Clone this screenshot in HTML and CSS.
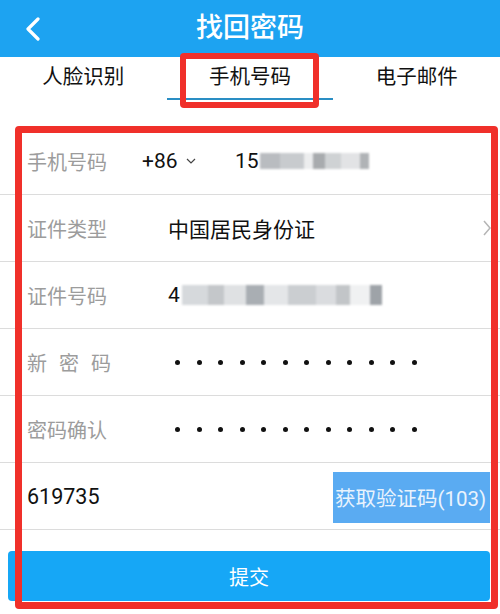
FILE: index.html
```html
<!DOCTYPE html>
<html lang="zh-CN">
<head>
    <meta charset="UTF-8">
    <meta name="viewport" content="width=device-width, initial-scale=1.0">
    <title>找回密码</title>
    <link rel="stylesheet" href="styles.css">
</head>
<body>
    <div class="page">
        <header class="topbar">
            <span class="back">
                <svg width="16" height="24" viewBox="0 0 16 24"><path d="M13 2 L3 12 L13 22" fill="none" stroke="#fff" stroke-width="3.2" stroke-linecap="round" stroke-linejoin="round"/></svg>
            </span>
            <h1 class="title">找回密码</h1>
            <span></span>
        </header>

        <nav class="tabs">
            <div class="tab">人脸识别</div>
            <div class="tab active">手机号码</div>
            <div class="tab">电子邮件</div>
        </nav>

        <form class="form">
            <div class="row">
                <span class="label">手机号码</span>
                <span class="area">+86
                    <svg width="12" height="8" viewBox="0 0 12 8"><path d="M2 2 L6 6 L10 2" fill="none" stroke="#444" stroke-width="1.2"/></svg>
                </span>
                <span class="value">15</span>
                <span class="blur phone-blur">
                    <i style="width:20px;background:#b9bcc0"></i>
                    <i style="width:24px;background:#c8cbce"></i>
                    <i style="width:9px;background:#ecedee"></i>
                    <i style="width:12px;background:#a8abae"></i>
                    <i style="width:16px;background:#cfd2d4"></i>
                    <i style="width:19px;background:#e2e3e5"></i>
                    <i style="width:9px;background:#b0b3b6"></i>
                </span>
            </div>
            <div class="row">
                <span class="label">证件类型</span>
                <span class="value">中国居民身份证</span>
                <svg class="chevron" width="10" height="16" viewBox="0 0 10 16"><path d="M2 1 L8 8 L2 15" fill="none" stroke="#b5b5b5" stroke-width="1.5"/></svg>
            </div>
            <div class="row">
                <span class="label">证件号码</span>
                <span class="value">4</span>
                <span class="blur id-blur">
                    <i style="width:26px;background:#d6d9dc"></i>
                    <i style="width:16px;background:#c4c7ca"></i>
                    <i style="width:22px;background:#dfe1e3"></i>
                    <i style="width:18px;background:#a9aeb3"></i>
                    <i style="width:24px;background:#e4e6e8"></i>
                    <i style="width:28px;background:#cbced1"></i>
                    <i style="width:20px;background:#dadcdf"></i>
                    <i style="width:14px;background:#c2c5c8"></i>
                    <i style="width:20px;background:#f0f1f2"></i>
                    <i style="width:12px;background:#9ea3a8"></i>
                </span>
            </div>
            <div class="row">
                <span class="label spaced">新密码</span>
                <span class="dots">
                    <i></i><i></i><i></i><i></i><i></i><i></i><i></i><i></i><i></i><i></i><i></i><i></i>
                </span>
            </div>
            <div class="row">
                <span class="label">密码确认</span>
                <span class="dots">
                    <i></i><i></i><i></i><i></i><i></i><i></i><i></i><i></i><i></i><i></i><i></i><i></i>
                </span>
            </div>
            <div class="row code-row">
                <span class="code">619735</span>
                <button type="button" class="code-btn">获取验证码(103)</button>
            </div>

            <button type="submit" class="submit">提交</button>
        </form>

        <div class="mark mark-tab"></div>
        <div class="mark mark-form"></div>
    </div>
</body>
</html>
```

FILE: styles.css
```css
* {
    box-sizing: border-box;
}

body {
    margin: 0;
    font-family: Roboto, "Noto Sans CJK SC", sans-serif;
    background-color: #fff;
    color: #111;
}

.page {
    position: relative;
    width: 500px;
    height: 614px;
    overflow: hidden;
}

.topbar {
    height: 57px;
    background-color: #1da3f1;
    display: grid;
    grid-template-columns: 80px 1fr 80px;
    align-items: center;
}

.back {
    padding-left: 25px;
    display: flex;
    align-items: center;
}

.title {
    margin: 0;
    text-align: center;
    color: #fff;
    font-size: 27px;
    font-weight: 500;
    line-height: 1;
}

.tabs {
    display: flex;
    height: 43px;
}

.tab {
    flex: 1;
    text-align: center;
    font-size: 20.5px;
    line-height: 41px;
    color: #111;
}

.tab.active {
    border-bottom: 2px solid #2a8ec4;
}

.form {
    margin-top: 28px;
}

.row {
    height: 67px;
    border-bottom: 1px solid #dcdcdc;
    display: flex;
    align-items: center;
    padding-left: 27px;
    font-size: 21px;
}

.label {
    width: 141px;
    flex-shrink: 0;
    color: #9c9c9c;
    font-size: 20px;
}

.label.spaced {
    width: 84px;
    margin-right: 57px;
    text-align: justify;
    text-align-last: justify;
}

.area {
    width: 93px;
    margin-left: -26px;
    display: flex;
    align-items: center;
    gap: 7px;
    color: #111;
}

.value {
    color: #111;
}

.blur {
    display: flex;
    height: 16px;
    filter: blur(1.2px);
}

.blur i {
    display: block;
    height: 100%;
}

.phone-blur {
    margin-left: 1px;
}

.id-blur {
    height: 20px;
    margin-left: 2px;
}

.chevron {
    margin-left: auto;
    margin-right: 8px;
}

.dots {
    display: flex;
    gap: 16.5px;
    padding-left: 7px;
}

.dots i {
    display: block;
    width: 5px;
    height: 5px;
    border-radius: 50%;
    background-color: #111;
}

.code-row {
    justify-content: space-between;
    padding-right: 10px;
}

.code {
    font-size: 21.5px;
    color: #111;
}

.code-btn {
    width: 157px;
    height: 51px;
    border: none;
    padding: 0 0 0 2px;
    background-color: #5aabf2;
    color: #e9f3fd;
    font-family: inherit;
    font-size: 20.5px;
    white-space: nowrap;
    overflow: hidden;
    text-align: left;
    margin-top: 2px;
}

.submit {
    display: block;
    margin: 21px 0 0 8px;
    width: 482px;
    height: 50px;
    border: none;
    border-radius: 4px;
    background-color: #16a7f6;
    color: #fff;
    font-family: inherit;
    font-size: 20px;
}

/* red annotation boxes drawn over the screen */
.mark {
    position: absolute;
    border: 6px solid #f0302a;
    border-radius: 4px;
    pointer-events: none;
}

.mark-tab {
    left: 180px;
    top: 53px;
    width: 139px;
    height: 55px;
}

.mark-form {
    left: 15px;
    top: 126px;
    width: 483px;
    height: 483px;
    border-width: 7px;
}
```
